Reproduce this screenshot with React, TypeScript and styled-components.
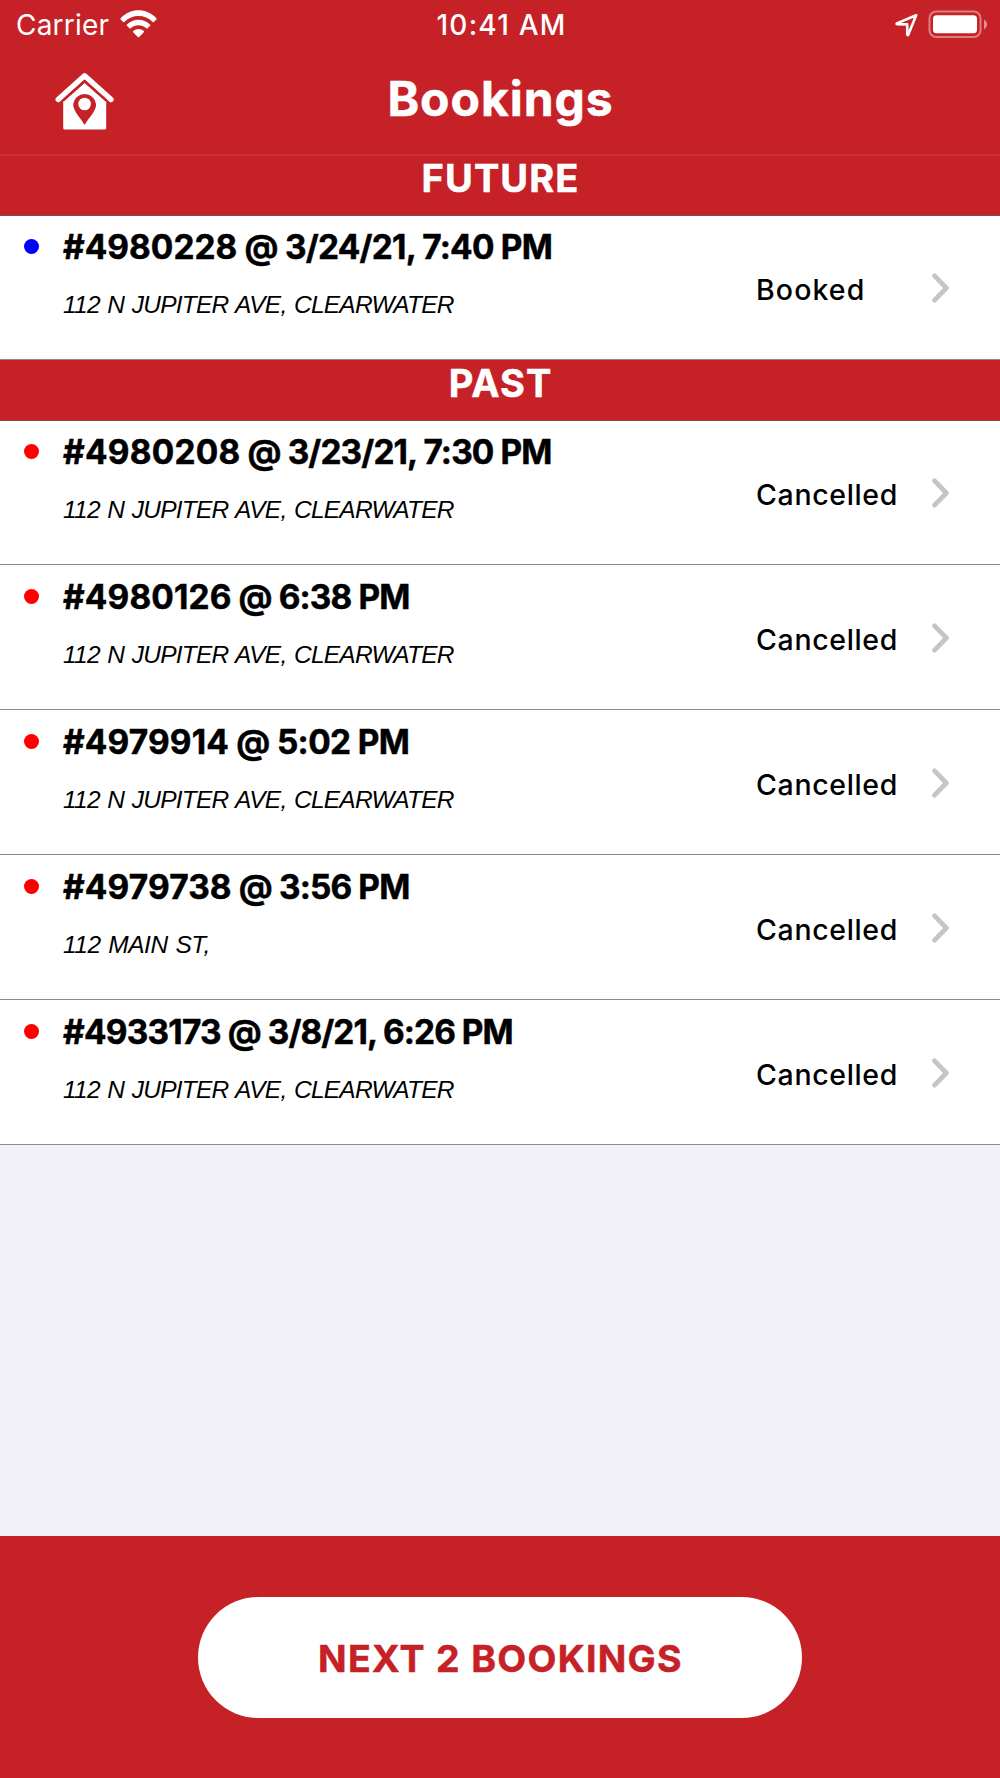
import React from "react";
import styled, { createGlobalStyle } from "styled-components";

const RED = "#c52127";

const GlobalStyle = createGlobalStyle`
  * { box-sizing: border-box; }
  body { margin: 0; background: #f2f1f7; font-family: Inter, "Liberation Sans", sans-serif; }
`;

const Screen = styled.main`
  width: 1000px;
  height: 1778px;
  display: flex;
  flex-direction: column;
  background: #f2f1f7;
  overflow: hidden;
`;

const StatusBar = styled.div`
  height: 46px;
  flex: none;
  display: grid;
  grid-template-columns: 1fr auto 1fr;
  align-items: start;
  padding: 0 13px 0 16px;
  background: ${RED};
  color: #fff;
`;

const StatusText = styled.span<{ $spacing: number; $weight: number }>`
  font-size: 28px;
  line-height: 51px;
  font-weight: ${(p) => p.$weight};
  letter-spacing: ${(p) => p.$spacing}px;
  white-space: nowrap;
`;

const Carrier = styled.div`
  display: flex;
  gap: 11px;
`;

const Indicators = styled.div`
  display: flex;
  justify-content: flex-end;
  gap: 9px;
  padding-top: 10px;
`;

const WifiIcon = styled.svg`
  margin-top: 10px;
`;

const NavBar = styled.header`
  height: 110px;
  flex: none;
  display: grid;
  grid-template-columns: 1fr auto 1fr;
  align-items: start;
  padding: 0 55px;
  background: ${RED};
  border-bottom: 2px solid #cb2d36;
`;

const HomeButton = styled.button`
  width: 60px;
  height: 60px;
  margin-top: 26px;
  padding: 0;
  border: 0;
  background: none;
`;

const Title = styled.h1`
  margin: 23px 0 0;
  color: #fff;
  font-size: 48px;
  line-height: 60px;
  font-weight: 700;
  letter-spacing: 0.95px;
  text-indent: 1px;
  -webkit-text-stroke: 0.5px currentColor;
`;

const SectionHeader = styled.h2<{ $height: number; $top: number; $spacing: number }>`
  height: ${(p) => p.$height}px;
  flex: none;
  margin: 0;
  padding-top: ${(p) => p.$top}px;
  background: ${RED};
  border-bottom: 1px solid #7d4a4e;
  color: #fff;
  font-size: 38px;
  line-height: 40px;
  font-weight: 700;
  letter-spacing: ${(p) => p.$spacing}px;
  text-indent: ${(p) => p.$spacing}px;
  text-align: center;
  -webkit-text-stroke: 0.5px currentColor;
`;

const Row = styled.article<{ $height: number; $top: number }>`
  height: ${(p) => p.$height}px;
  flex: none;
  display: grid;
  grid-template-columns: 63px 692px 177px 1fr;
  padding-top: ${(p) => p.$top}px;
  background: #fff;
  border-bottom: 1px solid #8b8b8d;
  color: #000;
`;

const Dot = styled.span<{ $color: string }>`
  width: 15px;
  height: 15px;
  margin: 23px 0 0 24px;
  border-radius: 50%;
  background: ${(p) => p.$color};
`;

const Details = styled.div`
  padding-top: 11px;
`;

const BookingTitle = styled.h3<{ $spacing: number }>`
  margin: 0;
  font-size: 33.4px;
  line-height: 40px;
  font-weight: 700;
  letter-spacing: ${(p) => p.$spacing}px;
  white-space: nowrap;
  -webkit-text-stroke: 0.5px currentColor;
`;

const BookingNumber = styled.span<{ $spacing: number }>`
  letter-spacing: ${(p) => p.$spacing}px;
`;

const Address = styled.p<{ $spacing: number }>`
  margin: 23px 0 0;
  font: italic 24.5px/30px "Liberation Sans", Arial, sans-serif;
  letter-spacing: ${(p) => p.$spacing}px;
  word-spacing: 1.5px;
  white-space: nowrap;
`;

const State = styled.span<{ $spacing: number }>`
  padding: 54px 0 0 1px;
  font-size: 28.5px;
  line-height: 40px;
  font-weight: 500;
  letter-spacing: ${(p) => p.$spacing}px;
`;

const Chevron = styled.svg`
  margin-top: 56px;
`;

const Footer = styled.footer`
  height: 242px;
  flex: none;
  margin-top: auto;
  display: flex;
  justify-content: center;
  padding-top: 61px;
  background: ${RED};
`;

const NextButton = styled.button`
  width: 604px;
  height: 121px;
  border: 0;
  border-radius: 61px;
  padding: 3px 0 0 1px;
  background: #fff;
  color: ${RED};
  font: 700 37.5px/44px Inter, "Liberation Sans", sans-serif;
  letter-spacing: 1.3px;
  -webkit-text-stroke: 0.5px currentColor;
`;

type Booking = {
  number: string;
  numberSpacing: number;
  time: string;
  timeSpacing: number;
  address: string;
  state: "Booked" | "Cancelled";
};

const HOME_ADDRESS = "112 N JUPITER AVE, CLEARWATER";

const future: Booking[] = [
  { number: "#4980228", numberSpacing: 0.05, time: "3/24/21, 7:40 PM", timeSpacing: -0.75, address: HOME_ADDRESS, state: "Booked" },
];

const past: Booking[] = [
  { number: "#4980208", numberSpacing: 0.25, time: "3/23/21, 7:30 PM", timeSpacing: -0.86, address: HOME_ADDRESS, state: "Cancelled" },
  { number: "#4980126", numberSpacing: 0.15, time: "6:38 PM", timeSpacing: -0.85, address: HOME_ADDRESS, state: "Cancelled" },
  { number: "#4979914", numberSpacing: 0.15, time: "5:02 PM", timeSpacing: -0.6, address: HOME_ADDRESS, state: "Cancelled" },
  { number: "#4979738", numberSpacing: 0.15, time: "3:56 PM", timeSpacing: -0.85, address: "112 MAIN ST,", state: "Cancelled" },
  { number: "#4933173", numberSpacing: -0.75, time: "3/8/21, 6:26 PM", timeSpacing: -0.93, address: HOME_ADDRESS, state: "Cancelled" },
];

function BookingRow({ booking, height, top = 0 }: { booking: Booking; height: number; top?: number }) {
  const booked = booking.state === "Booked";
  return (
    <Row $height={height} $top={top}>
      <Dot $color={booked ? "#0000ff" : "#ff0000"} />
      <Details>
        <BookingTitle $spacing={booking.timeSpacing}>
          <BookingNumber $spacing={booking.numberSpacing}>{booking.number}</BookingNumber> @ {booking.time}
        </BookingTitle>
        <Address $spacing={booking.address === HOME_ADDRESS ? -0.77 : -0.5}>{booking.address}</Address>
      </Details>
      <State $spacing={booked ? 1.1 : 0.65}>{booking.state}</State>
      <Chevron width="18" height="31" viewBox="0 0 18 31" fill="none">
        <path d="M2.6 3.8 14.4 16 2.6 28.2" stroke="#c5c5c7" strokeWidth="4.8" strokeLinecap="round" strokeLinejoin="round" />
      </Chevron>
    </Row>
  );
}

export default function App() {
  return (
    <Screen>
      <GlobalStyle />
      <StatusBar>
        <Carrier>
          <StatusText $spacing={0.2} $weight={400}>Carrier</StatusText>
          <WifiIcon width="37" height="28" viewBox="0 0 37 28" fill="#fff">
            <path d="M.6 8.2C11-2.4 26-2.4 36.4 8.2q.5.6 0 1.2l-2.5 2.5q-.6.5-1.2 0c-8-7.8-20.4-7.8-28.4 0q-.6.5-1.2 0L.6 9.4q-.5-.6 0-1.2Z" />
            <path d="M6.9 14.6c6.7-6.6 16.5-6.6 23.2 0q.6.6 0 1.2l-2.500 2.500q-.6.5-1.200 0c-4.600-4.200-11.200-4.200-15.800 0q-.6.5-1.200 0l-2.500-2.500q-.6-.6 0-1.200Z" />
            <path d="M13.200 21.100c3-2.900 7.600-2.900 10.600 0q.6.6 0 1.200l-4.600 4.600q-.7.6-1.400 0l-4.600-4.600q-.6-.6 0-1.200Z" />
          </WifiIcon>
        </Carrier>
        <StatusText $spacing={1.2} $weight={500}>10:41 AM</StatusText>
        <Indicators>
          <svg width="24" height="28" viewBox="0 0 24 28" fill="none">
            <path d="M21.200 5.300 1.800 13.400q-.5.5.2.7l10.200.3.1 10.300q.2.7.8.2Z" stroke="#fff" strokeWidth="2.600" strokeLinejoin="round" />
          </svg>
          <svg width="59" height="28" viewBox="0 0 59 28">
            <rect x="1.500" y="1.600" width="51" height="25.300" rx="6.500" fill="none" stroke="#fff" strokeOpacity=".42" strokeWidth="2" />
            <rect x="5" y="5.200" width="44" height="18" rx="3.500" fill="#fff" />
            <path d="M56 9.400q3 1.600 3 4.900t-3 4.900Z" fill="#fff" fillOpacity=".5" />
          </svg>
        </Indicators>
      </StatusBar>
      <NavBar>
        <HomeButton aria-label="Home">
          <svg width="60" height="60" viewBox="0 0 60 60">
            <path d="M3.200 27.400 29.600 3.800 56 27.400" fill="none" stroke="#fff" strokeWidth="5.400" strokeLinecap="round" strokeLinejoin="round" />
            <path d="M8.200 29.400 29.600 10.800 51.200 29.400V56q0 1.600-1.600 1.600H9.800Q8.200 57.600 8.200 56Z" fill="#fff" />
            <path d="M29.600 53C25.700 46 18.200 39.400 18.200 32.200a11.500 11.300 0 0 1 22.900 0C41.100 39.400 33.500 46 29.600 53Z" fill={RED} />
            <circle cx="29.600" cy="32" r="6.300" fill="#fff" />
            <path d="M8 28.600 29.600 9.300 51.400 28.600" fill="none" stroke={RED} strokeWidth="2.400" strokeLinejoin="miter" />
          </svg>
        </HomeButton>
        <Title>Bookings</Title>
      </NavBar>
      <SectionHeader $height={60} $top={2} $spacing={1.1}>FUTURE</SectionHeader>
      {future.map((b) => <BookingRow key={b.number} booking={b} height={144} />)}
      <SectionHeader $height={61} $top={2.5} $spacing={1}>PAST</SectionHeader>
      {past.map((b, i) => (
        <BookingRow key={b.number} booking={b} height={i === 0 ? 144 : 145} top={i === 0 ? 0 : 1} />
      ))}
      <Footer>
        <NextButton>NEXT 2 BOOKINGS</NextButton>
      </Footer>
    </Screen>
  );
}
